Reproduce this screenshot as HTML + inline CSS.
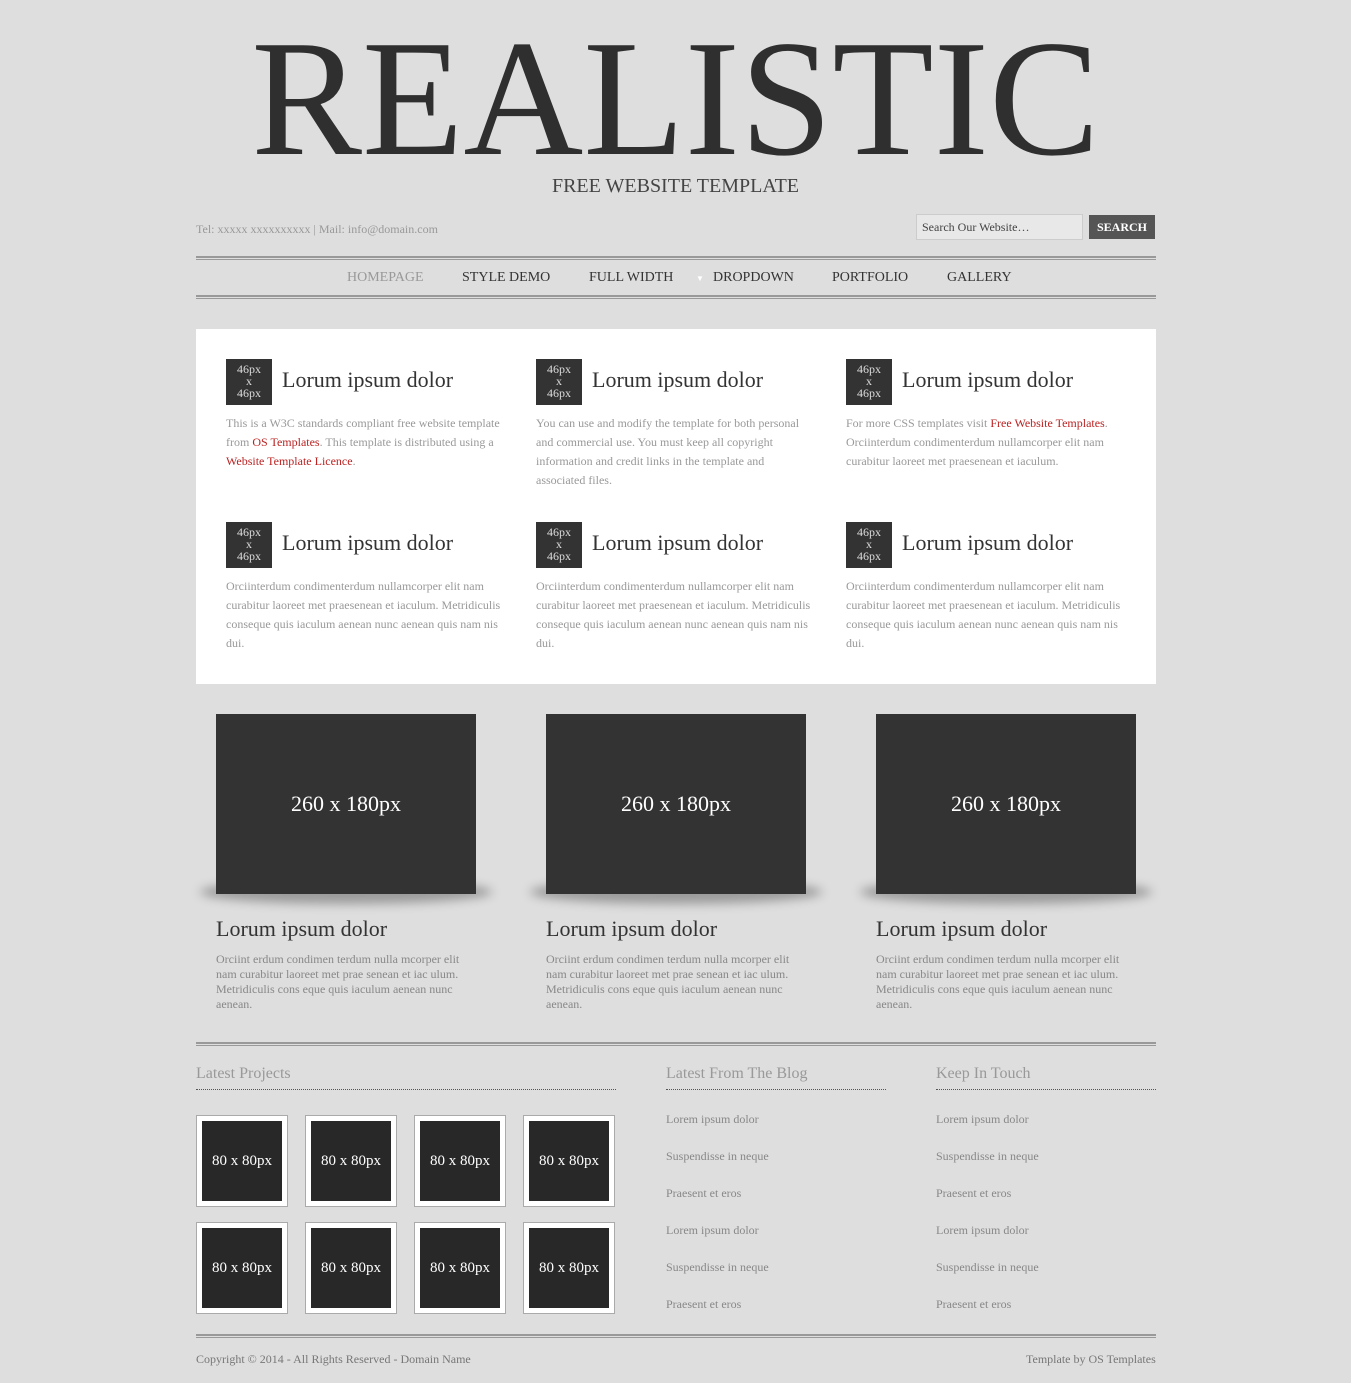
<!DOCTYPE html>
<html><head><meta charset="utf-8">
<style>
*{margin:0;padding:0;box-sizing:border-box}
body{width:1351px;height:1383px;background:#dedede;font-family:"Liberation Serif",serif;position:relative;overflow:hidden;color:#333}
.a{position:absolute;white-space:nowrap}
a{text-decoration:none}
.title{left:0;width:1351px;text-align:center;top:0;font-size:166px;line-height:196px;color:#2f2f2f}
.sub{left:0;width:1351px;text-align:center;top:175px;font-size:20px;color:#444}
.dbl{position:absolute;left:196px;width:960px;height:4px;border-top:2px solid #999;border-bottom:1px solid #999}
.nav{top:270px;font-size:14px;color:#333}
.box{position:absolute;left:196px;top:329px;width:960px;height:355px;background:#fff}
.ic{position:absolute;width:46px;height:46px;background:#333;color:#ddd;font-size:12px;line-height:12px;text-align:center;padding-top:4px}
.h{position:absolute;font-size:22px;color:#333;white-space:nowrap}
.p{position:absolute;font-size:12px;line-height:19px;color:#999;width:280px}
.p a{color:#b22}
.sh{position:absolute;width:292px;height:24px;border-radius:50%;background:rgba(0,0,0,.3);filter:blur(5px)}
.img{position:absolute;width:260px;height:180px;background:#333;color:#fff;font-size:22px;text-align:center;line-height:180px}
.p2{position:absolute;font-size:12px;line-height:15px;color:#888;width:250px}
.fh{position:absolute;font-size:16px;color:#999;border-bottom:1px dotted #555;padding-bottom:6px}
.th{position:absolute;width:92px;height:92px;background:#fff;border:1px solid #aaa;padding:5px}
.th div{width:80px;height:80px;background:#282828;color:#fff;font-size:15px;text-align:center;line-height:80px}
.l{position:absolute;font-size:12px;color:#888}
</style></head><body>
<div class="a title">REALISTIC</div>
<div class="a sub">FREE WEBSITE TEMPLATE</div>
<div class="a" style="left:196px;top:222px;font-size:12px;color:#999">Tel: xxxxx xxxxxxxxxx | Mail: info@domain.com</div>
<div class="a" style="left:916px;top:214px;width:167px;height:26px;border:1px solid #ccc;background:#e8e8e8;font-size:12px;padding:5px;color:#444">Search Our Website…</div>
<div class="a" style="left:1089px;top:215px;width:66px;height:24px;background:#555;color:#fff;font-size:12px;font-weight:bold;text-align:center;line-height:24px">SEARCH</div>
<div class="dbl" style="top:256px"></div>
<div class="a nav" style="left:347px;color:#999">HOMEPAGE</div>
<div class="a nav" style="left:462px">STYLE DEMO</div>
<div class="a nav" style="left:589px">FULL WIDTH</div>
<div class="a nav" style="left:696px;font-size:8px;top:274px;color:#fff">▼</div>
<div class="a nav" style="left:713px">DROPDOWN</div>
<div class="a nav" style="left:832px">PORTFOLIO</div>
<div class="a nav" style="left:947px">GALLERY</div>
<div class="dbl" style="top:295px"></div>

<div class="box"></div>
<div class="ic" style="left:226px;top:359px">46px<br>x<br>46px</div><div class="h" style="left:282px;top:367px">Lorum ipsum dolor</div>
<div class="ic" style="left:536px;top:359px">46px<br>x<br>46px</div><div class="h" style="left:592px;top:367px">Lorum ipsum dolor</div>
<div class="ic" style="left:846px;top:359px">46px<br>x<br>46px</div><div class="h" style="left:902px;top:367px">Lorum ipsum dolor</div>
<div class="p" style="left:226px;top:414px">This is a W3C standards compliant free website template from <a>OS Templates</a>. This template is distributed using a <a>Website Template Licence</a>.</div>
<div class="p" style="left:536px;top:414px">You can use and modify the template for both personal and commercial use. You must keep all copyright information and credit links in the template and associated files.</div>
<div class="p" style="left:846px;top:414px">For more CSS templates visit <a>Free Website Templates</a>. Orciinterdum condimenterdum nullamcorper elit nam curabitur laoreet met praesenean et iaculum.</div>
<div class="ic" style="left:226px;top:522px">46px<br>x<br>46px</div><div class="h" style="left:282px;top:530px">Lorum ipsum dolor</div>
<div class="ic" style="left:536px;top:522px">46px<br>x<br>46px</div><div class="h" style="left:592px;top:530px">Lorum ipsum dolor</div>
<div class="ic" style="left:846px;top:522px">46px<br>x<br>46px</div><div class="h" style="left:902px;top:530px">Lorum ipsum dolor</div>
<div class="p" style="left:226px;top:577px">Orciinterdum condimenterdum nullamcorper elit nam curabitur laoreet met praesenean et iaculum. Metridiculis conseque quis iaculum aenean nunc aenean quis nam nis dui.</div>
<div class="p" style="left:536px;top:577px">Orciinterdum condimenterdum nullamcorper elit nam curabitur laoreet met praesenean et iaculum. Metridiculis conseque quis iaculum aenean nunc aenean quis nam nis dui.</div>
<div class="p" style="left:846px;top:577px">Orciinterdum condimenterdum nullamcorper elit nam curabitur laoreet met praesenean et iaculum. Metridiculis conseque quis iaculum aenean nunc aenean quis nam nis dui.</div>

<div class="sh" style="left:200px;top:880px"></div>
<div class="sh" style="left:530px;top:880px"></div>
<div class="sh" style="left:860px;top:880px"></div>
<div class="img" style="left:216px;top:714px">260 x 180px</div>
<div class="img" style="left:546px;top:714px">260 x 180px</div>
<div class="img" style="left:876px;top:714px">260 x 180px</div>
<div class="h" style="left:216px;top:916px">Lorum ipsum dolor</div>
<div class="h" style="left:546px;top:916px">Lorum ipsum dolor</div>
<div class="h" style="left:876px;top:916px">Lorum ipsum dolor</div>
<div class="p2" style="left:216px;top:952px">Orciint erdum condimen terdum nulla mcorper elit nam curabitur laoreet met prae senean et iac ulum. Metridiculis cons eque quis iaculum aenean nunc aenean.</div>
<div class="p2" style="left:546px;top:952px">Orciint erdum condimen terdum nulla mcorper elit nam curabitur laoreet met prae senean et iac ulum. Metridiculis cons eque quis iaculum aenean nunc aenean.</div>
<div class="p2" style="left:876px;top:952px">Orciint erdum condimen terdum nulla mcorper elit nam curabitur laoreet met prae senean et iac ulum. Metridiculis cons eque quis iaculum aenean nunc aenean.</div>

<div class="dbl" style="top:1042px"></div>
<div class="fh" style="left:196px;top:1065px;width:420px">Latest Projects</div>
<div class="fh" style="left:666px;top:1065px;width:220px">Latest From The Blog</div>
<div class="fh" style="left:936px;top:1065px;width:220px">Keep In Touch</div>
<div class="th" style="left:196px;top:1115px"><div>80 x 80px</div></div>
<div class="th" style="left:305px;top:1115px"><div>80 x 80px</div></div>
<div class="th" style="left:414px;top:1115px"><div>80 x 80px</div></div>
<div class="th" style="left:523px;top:1115px"><div>80 x 80px</div></div>
<div class="th" style="left:196px;top:1222px"><div>80 x 80px</div></div>
<div class="th" style="left:305px;top:1222px"><div>80 x 80px</div></div>
<div class="th" style="left:414px;top:1222px"><div>80 x 80px</div></div>
<div class="th" style="left:523px;top:1222px"><div>80 x 80px</div></div>

<div class="l" style="left:666px;top:1112px">Lorem ipsum dolor</div>
<div class="l" style="left:666px;top:1149px">Suspendisse in neque</div>
<div class="l" style="left:666px;top:1186px">Praesent et eros</div>
<div class="l" style="left:666px;top:1223px">Lorem ipsum dolor</div>
<div class="l" style="left:666px;top:1260px">Suspendisse in neque</div>
<div class="l" style="left:666px;top:1297px">Praesent et eros</div>
<div class="l" style="left:936px;top:1112px">Lorem ipsum dolor</div>
<div class="l" style="left:936px;top:1149px">Suspendisse in neque</div>
<div class="l" style="left:936px;top:1186px">Praesent et eros</div>
<div class="l" style="left:936px;top:1223px">Lorem ipsum dolor</div>
<div class="l" style="left:936px;top:1260px">Suspendisse in neque</div>
<div class="l" style="left:936px;top:1297px">Praesent et eros</div>

<div class="dbl" style="top:1334px"></div>
<div class="a" style="left:196px;top:1352px;font-size:12px;color:#777">Copyright © 2014 - All Rights Reserved - Domain Name</div>
<div class="a" style="left:1026px;top:1352px;font-size:12px;color:#777">Template by OS Templates</div>
</body></html>
